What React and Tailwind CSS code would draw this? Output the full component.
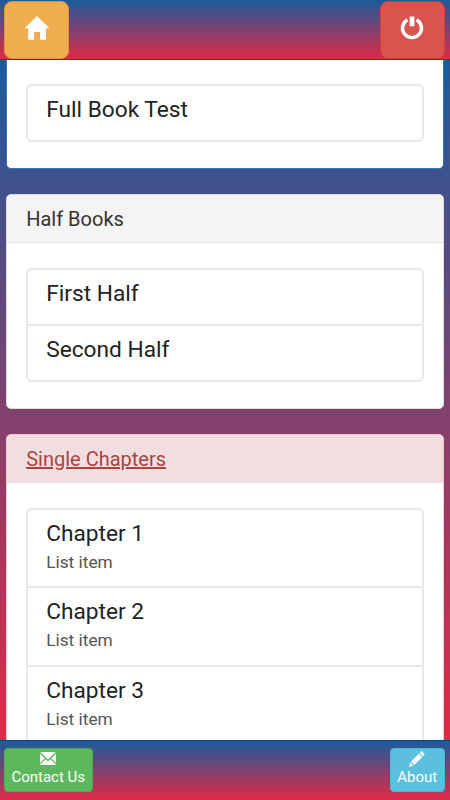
import React from 'react';
import clsx from 'clsx';

const panels = [
  {
    title: 'Full Book',
    type: 'primary',
    items: [{ name: 'Full Book Test' }],
  },
  {
    title: 'Half Books',
    type: 'default',
    items: [{ name: 'First Half' }, { name: 'Second Half' }],
  },
  {
    title: 'Single Chapters',
    type: 'danger',
    items: [
      { name: 'Chapter 1', text: 'List item' },
      { name: 'Chapter 2', text: 'List item' },
      { name: 'Chapter 3', text: 'List item' },
    ],
  },
];

const HomeIcon = () => (
  <svg width="24" height="24" viewBox="0 0 24 24" fill="#fff">
    <path d="M12 0 L24 11.7 V12.3 H21 V23.7 H15 V16 H9.2 V23.7 H3.2 V12.3 H0 V11.7 Z" />
  </svg>
);

const PowerIcon = () => (
  <svg width="24" height="24" viewBox="0 0 24 24" fill="none">
    <path d="M7.4 3.8 A9.5 9.5 0 1 0 16.6 3.8" stroke="#fff" strokeWidth="3.4" />
    <rect x="9.7" y="0.4" width="4.7" height="9.8" rx="0.8" fill="#fff" />
  </svg>
);

const EnvelopeIcon = () => (
  <svg width="16" height="13" viewBox="0 0 16 13" fill="#fff">
    <path d="M0.3 0 H15.7 L8 7.6 Z" />
    <path d="M0 1.6 L4.8 6.4 L0 10.8 Z" />
    <path d="M16 1.6 L11.2 6.4 L16 10.8 Z" />
    <path d="M5.7 7.3 L8 9.5 L10.3 7.3 L16 12.4 V13 H0 V12.4 Z" />
  </svg>
);

const PencilIcon = () => (
  <svg width="16" height="16" viewBox="0 0 16 16" fill="#fff">
    <path d="M11.9 0.6 Q12.5 0.1 13.1 0.6 L15.3 2.8 Q15.9 3.4 15.3 4 L13.9 5.4 L10.5 2 Z" />
    <path d="M9.7 2.8 L13.1 6.2 L5.2 14.1 L1.8 10.7 Z" />
    <path d="M1.2 11.5 L4.4 14.7 L0 16 Z" />
  </svg>
);

const ListItem = ({ item }) => (
  <li
    className={clsx(
      'border-b-2 border-[#e8e8e8] px-[18.2px] pt-[9px] last:border-b-0',
      item.text ? 'h-[79px] first:h-[78px]' : 'h-14 last:h-[54px]'
    )}
  >
    <h4 className="text-[22.7px] leading-[30px] text-[#222]">{item.name}</h4>
    {item.text && <p className="mt-px text-[17.3px] leading-6 text-[#555]">{item.text}</p>}
  </li>
);

const Panel = ({ panel }) => (
  <section
    className={clsx(
      'mb-[25px] rounded-[5px] border bg-white',
      panel.type === 'primary' && 'border-[#2a78bd]',
      panel.type === 'default' && 'border-[#ddd]',
      panel.type === 'danger' && 'border-[#ebccd1]'
    )}
  >
    <h3
      className={clsx(
        'h-12 rounded-t-[4px] border-b px-[19.2px] text-[20px] leading-[48px]',
        panel.type === 'primary' && 'border-[#337ab7] bg-[#337ab7] text-white',
        panel.type === 'default' && 'border-[#e2e2e2] bg-[#f4f4f4] text-[#333]',
        panel.type === 'danger' && 'border-[#f2dede] bg-[#f2dede] text-[#a94442] underline'
      )}
    >
      {panel.title}
    </h3>
    <div className="px-[19px] pt-[25px] pb-[26px]">
      <ul className="rounded-[6px] border-2 border-[#e8e8e8]">
        {panel.items.map((item) => (
          <ListItem key={item.name} item={item} />
        ))}
      </ul>
    </div>
  </section>
);

const App = () => {
  return (
    <div className="flex h-[800px] w-[450px] flex-col overflow-hidden font-['Roboto',sans-serif]">
      {/* Top bar */}
      <header className="flex h-[60px] shrink-0 justify-between border-b border-[#c4000f] bg-linear-to-b/srgb from-[#1c5a9b] to-[#df2a45] pt-px pr-[5px] pl-[3.5px]">
        <button className="flex h-[58px] w-[65.5px] justify-center rounded-[8px] border border-[#e5943a] bg-[#f0ad4e] pt-[14px] pl-px">
          <HomeIcon />
        </button>
        <button className="flex h-[58px] w-[65.5px] justify-center rounded-[8px] border border-[#d43f3a] bg-[#d9534f] pt-[14px]">
          <PowerIcon />
        </button>
      </header>

      {/* Panels, scrolled to the end of the first one */}
      <main className="flex min-h-0 flex-1 flex-col justify-start overflow-hidden bg-linear-to-b/srgb from-[#1c5a9b] to-[#df2a45] pr-[6.5px] pl-[6px]">
        <div className="-mt-[50px]">
          {panels.map((panel) => (
            <Panel key={panel.title} panel={panel} />
          ))}
        </div>
      </main>

      {/* Bottom bar */}
      <footer className="flex h-[60px] shrink-0 justify-between border-t border-[#00408f] bg-linear-to-b/srgb from-[#1c5a9b] to-[#df2a45] pt-[7px] pr-[5px] pl-[3.5px] text-[15px] leading-5 text-white">
        <button className="flex h-[43.5px] w-[89.5px] flex-col items-center rounded-[4px] border border-[#4cae4c] bg-[#5cb85c] pt-[3px]">
          <EnvelopeIcon />
          <span className="mt-[2px]">Contact Us</span>
        </button>
        <button className="flex h-[43.5px] w-[55.5px] flex-col items-center rounded-[4px] border border-[#46b8da] bg-[#5bc0de] pt-[2px]">
          <PencilIcon />
          <span>About</span>
        </button>
      </footer>
    </div>
  );
};

export default App;
